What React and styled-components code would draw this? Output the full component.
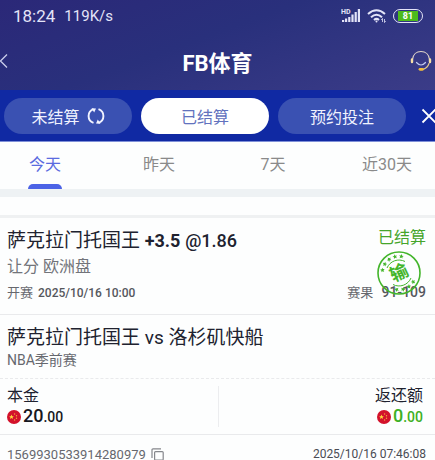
import React from 'react';
import styled, { createGlobalStyle } from 'styled-components';

const GlobalStyle = createGlobalStyle`
    * {
        box-sizing: border-box;
    }
    body {
        margin: 0;
        overflow-x: hidden;
        background: #FDFEFE;
        font-family: Roboto, 'Noto Sans CJK SC', sans-serif;
        color: #20222F;
    }
    button {
        border: 0;
        padding: 0;
        background: none;
        font-family: inherit;
        color: inherit;
        cursor: pointer;
    }
    h1, h2, p, dl, dt, dd {
        margin: 0;
        font-weight: 400;
    }
    svg {
        display: block;
        flex: none;
    }
`
const Page = styled.div`
    overflow: hidden;
`
const Header = styled.header`
    background: linear-gradient(160deg, #2B2878 0%, #29307C 45%, #3B3C88 100%);
    color: #FFFFFF;
`
const StatusBar = styled.div`
    display: flex;
    align-items: center;
    height: 32px;
    padding: 0 12px 0 13px;
    color: #E4E4F8;
`
const Clock = styled.span`
    font-size: 17px;
    margin-right: 9px;
`
const Speed = styled.span`
    font-size: 15px;
`
const StatusIcons = styled.div`
    display: flex;
    align-items: center;
    gap: 6px;
    margin-left: auto;
`
const Battery = styled.span`
    display: flex;
    width: 30px;
    height: 14px;
    padding: 1px 4px;
    border: 1px solid #E4E4F8;
    border-radius: 7px;
`
const BatteryLevel = styled.span`
    flex: 1;
    background: #4CBB1C;
    color: #FFFFFF;
    font-size: 9px;
    font-weight: 700;
    line-height: 10px;
    text-align: center;
`
const TitleBar = styled.div`
    display: grid;
    grid-template-columns: 40px 1fr 40px;
    align-items: center;
    height: 58px;
`
const Title = styled.h1`
    font-size: 22px;
    font-weight: 700;
    text-align: center;
`
const BackButton = styled.button`
    justify-self: start;
`
const ServiceButton = styled.button`
    justify-self: end;
    padding-right: 3px;
`
const ActionBar = styled.div`
    display: flex;
    align-items: center;
    gap: 9px;
    height: 52px;
    padding-left: 4px;
    background: #1029A3;
    border-bottom: 1px solid #7F90D8;
`
const Pill = styled.button`
    display: flex;
    flex: 1;
    align-items: center;
    justify-content: center;
    gap: 7px;
    height: 36px;
    border-radius: 18px;
    font-size: 16px;
    background: ${(props) => (props.$active ? '#FFFFFF' : '#3A51B2')};
    color: ${(props) => (props.$active ? '#6272BE' : '#F1F3FF')};
`
const CloseButton = styled.button`
    width: 20px;
    padding-left: 6px;
    overflow: hidden;
`
const Tabs = styled.nav`
    display: grid;
    grid-template-columns: repeat(4, 1fr);
    margin: 0 -9px 0 -12px;
`
const Tab = styled.button`
    display: flex;
    flex-direction: column;
    align-items: center;
    justify-content: space-between;
    height: 47px;
    padding-top: 12px;
    font-size: 16px;
    line-height: 22px;
    color: ${(props) => (props.$active ? '#5A6BE0' : '#8A8A8A')};

    &::after {
        content: '';
        width: 34px;
        height: 5px;
        border-radius: 5px 5px 0 0;
        background: ${(props) => (props.$active ? '#4C63E6' : 'transparent')};
    }
`
const Band = styled.div`
    height: 8px;
    background: #EEF2F4;
`
const Ticket = styled.article`
    margin-top: 18px;
    border-top: 3px solid #EFF1F2;
`
const Section = styled.section`
    padding: 10px 9px 9px 7px;
    border-bottom: 1px ${(props) => (props.$dashed ? 'dashed' : 'solid')} #E9EAEC;
`
const Row = styled.div`
    display: flex;
    align-items: center;
    justify-content: space-between;
`
const TeamLine = styled.h2`
    font-size: 19px;
    line-height: 26px;
    white-space: nowrap;
`
const Handicap = styled.strong`
    font-size: 18px;
    font-weight: 700;
`
const Odds = styled.span`
    font-size: 18px;
    font-weight: 500;
`
const State = styled.span`
    font-size: 16px;
    line-height: 20px;
    color: #45A52B;
    align-self: flex-start;
`
const Market = styled.p`
    font-size: 16px;
    line-height: 26px;
    color: #72747A;
`
const Detail = styled.p`
    font-size: 13px;
    line-height: 24px;
    color: #66686E;
`
const Strong = styled.span`
    margin-left: 5px;
    font-size: ${(props) => (props.$large ? 14 : 12)}px;
    font-weight: 500;
    color: #55575D;
`
const Result = styled.div`
    position: relative;
`
const Stamp = styled.svg`
    position: absolute;
    right: 4px;
    bottom: 9px;
`
const League = styled.p`
    font-size: 14px;
    line-height: 18px;
    color: #66686E;
`
const Amounts = styled.dl`
    display: grid;
    grid-template-columns: 1fr 1fr;
    padding: 7px 0;
    border-bottom: 1px solid #E9EAEC;
`
const Amount = styled.div`
    display: flex;
    flex-direction: column;
    align-items: ${(props) => (props.$end ? 'flex-end' : 'flex-start')};
    padding: 0 12px 0 7px;
    border-left: ${(props) => (props.$end ? '1px solid #ECEDEF' : '0')};
`
const AmountLabel = styled.dt`
    font-size: 16px;
    line-height: 20px;
`
const AmountValue = styled.dd`
    display: flex;
    align-items: center;
    gap: 2px;
    font-size: 18px;
    font-weight: 500;
    line-height: 20px;
    color: ${(props) => (props.$win ? '#3DB024' : '#17181F')};
`
const Cents = styled.small`
    font-size: 14px;
`
const Footer = styled.footer`
    display: flex;
    align-items: center;
    justify-content: space-between;
    height: 38px;
    padding: 0 9px 0 7px;
`
const OrderNumber = styled.div`
    display: flex;
    align-items: center;
    gap: 5px;
    font-size: 13px;
    color: #66686E;
`
const PlacedAt = styled.time`
    font-size: 12px;
    color: #4A4C54;
`

const SignalIcon = () => (
    <svg width="20" height="16" viewBox="0 0 20 16" fill="#E4E4F8">
        <text x="0" y="6" fontSize="7" fontWeight="700">HD</text>
        <path d="M1 14V12H3.200V14ZM4 14V10.500H6.200V14ZM7.200 14V9H9.400V14ZM10.400 14V6.500H12.600V14ZM13.600 14V4H15.800V14ZM16.800 14V1H19V14Z" />
    </svg>
)

const WifiIcon = () => (
    <svg width="20" height="16" viewBox="0 0 20 16" fill="none" stroke="#E4E4F8" strokeWidth="2">
        <path d="M1 6Q9.500 -1.500 18 6M4 9.200Q9.500 4.200 15 9.200M7 12Q9.500 9.800 12 12" />
        <circle cx="9.500" cy="13.500" r="1" fill="#E4E4F8" stroke="none" />
        <path d="M15.500 10.500V14M14.300 12L15.500 10.500M17.500 11V14.500M18.700 13L17.500 14.500" strokeWidth="0.800" />
    </svg>
)

const BackIcon = () => (
    <svg width="8" height="16" viewBox="0 0 8 16" fill="none" stroke="#C9CBEA" strokeWidth="1.300">
        <path d="M7 1.500L0.500 8L7 14.500" />
    </svg>
)

const ServiceIcon = () => (
    <svg width="22" height="22" viewBox="0 0 22 22" fill="none" strokeLinecap="round">
        <path d="M2.500 9.500C3 4.500 6.600 1.500 11 1.500S19 4.500 19.500 9.500" stroke="#E3D7CB" strokeWidth="1.200" />
        <path d="M2 9.500V12M20 9.500V12" stroke="#F5DFA6" strokeWidth="2.400" />
        <path d="M19 13.500C18 16.500 16 18.500 13 19.300" stroke="#E2C98F" strokeWidth="1.200" />
        <path d="M6.500 12.500Q11 17.500 15.500 12.500" stroke="#BFC7EE" strokeWidth="1.200" />
        <path d="M10 19.300H12.500" stroke="#F2BD3D" strokeWidth="2.800" />
    </svg>
)

const RefreshIcon = () => (
    <svg width="18" height="18" viewBox="0 0 18 18" fill="none" stroke="#F1F3FF" strokeWidth="1.900">
        <path d="M6.500 15.900A7.300 7.300 0 0 1 6.500 2.100M11.500 2.100A7.300 7.300 0 0 1 11.500 15.900" />
        <path d="M4.500 1.200L9 1.500L7.200 5.500ZM13.500 16.800L9 16.500L10.800 12.500Z" fill="#F1F3FF" stroke="none" />
    </svg>
)

const CloseIcon = () => (
    <svg width="16" height="16" viewBox="0 0 16 16" fill="none" stroke="#FFFFFF" strokeWidth="1.800">
        <path d="M1.500 1.500L14.500 14.500M14.500 1.500L1.500 14.500" />
    </svg>
)

const CopyIcon = () => (
    <svg width="13" height="13" viewBox="0 0 13 13" fill="none" stroke="#85878C" strokeWidth="1.200">
        <rect x="3.600" y="3.600" width="8.600" height="8.600" rx="1" />
        <path d="M1 10V1.800Q1 0.800 2 0.800H10" />
    </svg>
)

const STAR = 'M0 -2.400L0.700 -0.800L2.300 -0.700L1.100 0.400L1.500 2L0 1.100L-1.500 2L-1.100 0.400L-2.300 -0.700L-0.700 -0.800Z'

const FlagIcon = () => (
    <svg width="14" height="14" viewBox="0 0 14 14">
        <circle cx="7" cy="7" r="7" fill="#D3122B" />
        <path d={STAR} transform="translate(4.500 7)" fill="#FFD83B" />
        <g fill="#F5A63A">
            <circle cx="7.600" cy="4" r="0.700" />
            <circle cx="9.500" cy="5.700" r="0.700" />
            <circle cx="9.500" cy="8.300" r="0.700" />
            <circle cx="7.600" cy="10" r="0.700" />
        </g>
    </svg>
)

const stampStars = [190, 212, 234, 256, 278, 32, 54, 76, 98]

const LoseStamp = () => (
    <Stamp width="46" height="46" viewBox="0 0 46 46" fill="none" stroke="#43B52B">
        <circle cx="23" cy="23" r="21" strokeWidth="1.600" />
        <path d="M11 18A13 13 0 0 1 29 11.500M35 28A13 13 0 0 1 17 34.500" strokeWidth="1" />
        <g fill="#43B52B" stroke="none">
            {stampStars.map((angle) => (
                <path
                    key={angle}
                    d={STAR}
                    transform={`rotate(${angle} 23 23) translate(39.800 23) rotate(90)`}
                />
            ))}
            <text x="23" y="29" fontSize="18" textAnchor="middle" fontWeight="700" transform="rotate(-25 23 23)">输</text>
        </g>
    </Stamp>
)

const App = () => {
    return(
        <Page>
            <GlobalStyle />
            <Header>
                <StatusBar>
                    <Clock>18:24</Clock>
                    <Speed>119K/s</Speed>
                    <StatusIcons>
                        <SignalIcon />
                        <WifiIcon />
                        <Battery>
                            <BatteryLevel>81</BatteryLevel>
                        </Battery>
                    </StatusIcons>
                </StatusBar>
                <TitleBar>
                    <BackButton aria-label="返回"><BackIcon /></BackButton>
                    <Title>FB体育</Title>
                    <ServiceButton aria-label="客服"><ServiceIcon /></ServiceButton>
                </TitleBar>
            </Header>
            <ActionBar>
                <Pill>未结算<RefreshIcon /></Pill>
                <Pill $active>已结算</Pill>
                <Pill>预约投注</Pill>
                <CloseButton aria-label="关闭"><CloseIcon /></CloseButton>
            </ActionBar>
            <Tabs>
                <Tab $active>今天</Tab>
                <Tab>昨天</Tab>
                <Tab>7天</Tab>
                <Tab>近30天</Tab>
            </Tabs>
            <Band />
            <Ticket>
                <Section>
                    <Row>
                        <TeamLine>萨克拉门托国王 <Handicap>+3.5</Handicap> <Odds>@1.86</Odds></TeamLine>
                        <State>已结算</State>
                    </Row>
                    <Market>让分 欧洲盘</Market>
                    <Row>
                        <Detail>开赛<Strong>2025/10/16 10:00</Strong></Detail>
                        <Result>
                            <Detail>赛果 <Strong $large>91-109</Strong></Detail>
                            <LoseStamp />
                        </Result>
                    </Row>
                </Section>
                <Section $dashed>
                    <TeamLine>萨克拉门托国王 vs 洛杉矶快船</TeamLine>
                    <League>NBA季前赛</League>
                </Section>
                <Amounts>
                    <Amount>
                        <AmountLabel>本金</AmountLabel>
                        <AmountValue><FlagIcon /><span>20<Cents>.00</Cents></span></AmountValue>
                    </Amount>
                    <Amount $end>
                        <AmountLabel>返还额</AmountLabel>
                        <AmountValue $win><FlagIcon /><span>0<Cents>.00</Cents></span></AmountValue>
                    </Amount>
                </Amounts>
                <Footer>
                    <OrderNumber>
                        1569930533914280979
                        <button aria-label="复制"><CopyIcon /></button>
                    </OrderNumber>
                    <PlacedAt>2025/10/16 07:46:08</PlacedAt>
                </Footer>
            </Ticket>
        </Page>
    )
}

export default App
